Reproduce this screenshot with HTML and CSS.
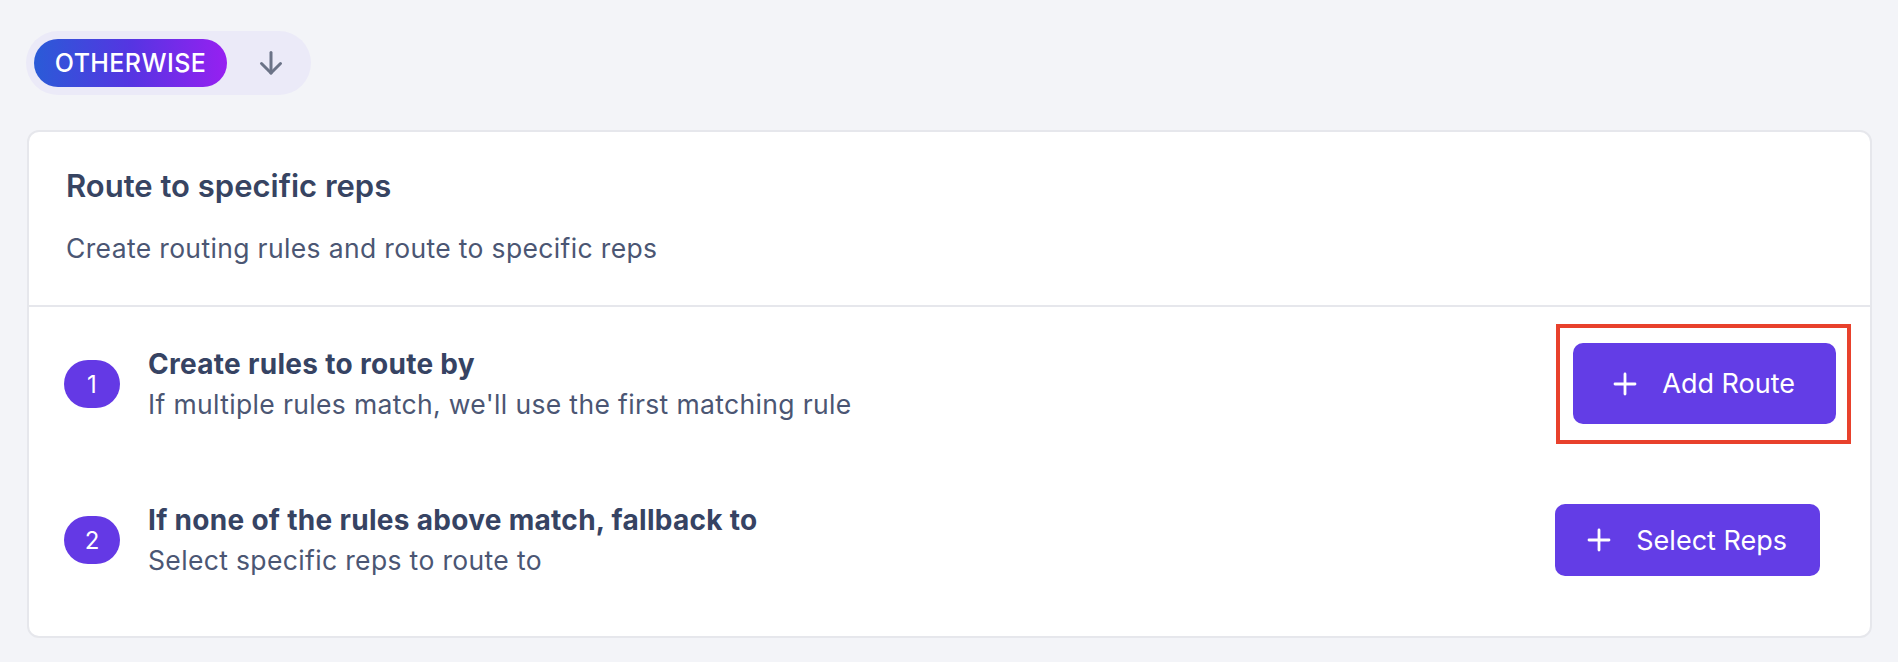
FILE: index.html
```html
<!DOCTYPE html>
<html lang="en">
<head>
<meta charset="utf-8">
<title>Route to specific reps</title>
<link rel="stylesheet" href="styles.css">
</head>
<body>
<div class="page">
  <div class="branch-toggle">
    <span class="branch-pill">OTHERWISE</span>
    <svg class="branch-arrow" width="26" height="26" viewBox="0 0 26 26" fill="none" stroke="currentColor" stroke-width="3" stroke-linecap="round" stroke-linejoin="round">
      <path d="M13 2.5V23"/>
      <path d="M3.5 13.5L13 23l9.5-9.5"/>
    </svg>
  </div>

  <section class="card">
    <header class="card-head">
      <h2 class="card-title">Route to specific reps</h2>
      <p class="card-sub">Create routing rules and route to specific reps</p>
    </header>
    <div class="card-body">
      <div class="step step-first">
        <span class="step-num">1</span>
        <div class="step-text">
          <div class="step-title">Create rules to route by</div>
          <div class="step-sub">If multiple rules match, we'll use the first matching rule</div>
        </div>
        <div class="highlight">
          <button class="btn btn-large">
            <svg class="plus" width="24" height="24" viewBox="0 0 24 24" fill="none" stroke="currentColor" stroke-width="2.8" stroke-linecap="round"><path d="M12 2v20M2 12h20"/></svg>
            <span>Add Route</span>
          </button>
        </div>
      </div>
      <div class="step step-second">
        <span class="step-num">2</span>
        <div class="step-text">
          <div class="step-title">If none of the rules above match, fallback to</div>
          <div class="step-sub">Select specific reps to route to</div>
        </div>
        <button class="btn btn-small">
          <svg class="plus" width="24" height="24" viewBox="0 0 24 24" fill="none" stroke="currentColor" stroke-width="2.8" stroke-linecap="round"><path d="M12 2v20M2 12h20"/></svg>
          <span>Select Reps</span>
        </button>
      </div>
    </div>
  </section>
</div>
</body>
</html>
```

FILE: styles.css
```css
* { box-sizing: border-box; }

html, body {
  margin: 0;
  padding: 0;
  background: #f3f4f8;
}

body {
  font-family: Inter, "Noto Sans", "Liberation Sans", sans-serif;
  color: #344160;
}

.page {
  padding: 31px 26px 0 26px;
}

.branch-toggle {
  display: flex;
  align-items: center;
  width: 285px;
  height: 64px;
  padding: 8px;
  border-radius: 32px;
  background: #ebeaf8;
}

.branch-pill {
  display: flex;
  align-items: center;
  justify-content: center;
  width: 193px;
  height: 48px;
  border-radius: 24px;
  background: linear-gradient(90deg, #2a5bd7 0%, #5535e2 50%, #9720f1 100%);
  color: #ffffff;
  font-size: 25px;
  font-weight: 500;
  letter-spacing: 0.4px;
}

.branch-arrow {
  margin-left: 31px;
  color: #6b7387;
}

.card {
  margin: 35px 0 0 1px;
  background: #ffffff;
  border: 2px solid #e6e7ec;
  border-radius: 12px;
}

.card-head {
  padding: 34px 37px 39px;
  border-bottom: 2px solid #e6e7ec;
}

.card-title {
  margin: 0;
  font-size: 31px;
  line-height: 40px;
  font-weight: 600;
  color: #374462;
}

.card-sub {
  margin: 24px 0 0;
  font-size: 26.5px;
  line-height: 36px;
  letter-spacing: 0.35px;
  font-weight: 400;
  color: #4b5673;
}

.card-body {
  display: flex;
  flex-direction: column;
  gap: 60px;
  padding: 17px 19px 60px 35px;
}

.step {
  display: flex;
  align-items: center;
}

.step-first { height: 120px; }
.step-second { height: 72px; }

.step-num {
  flex: none;
  display: flex;
  align-items: center;
  justify-content: center;
  width: 56px;
  height: 48px;
  border-radius: 24px;
  background: #6439e5;
  color: #ffffff;
  font-size: 24px;
  font-weight: 400;
}

.step-text {
  flex: 1;
  margin-left: 28px;
}

.step-title {
  font-size: 28px;
  line-height: 34px;
  letter-spacing: 0.3px;
  font-weight: 700;
  color: #364363;
}

.step-sub {
  margin-top: 5px;
  font-size: 26.5px;
  line-height: 36px;
  letter-spacing: 0.35px;
  font-weight: 400;
  color: #4b5673;
}

.highlight {
  flex: none;
  padding: 15px 11px 16px 13px;
  border: 4px solid #e8412c;
}

.btn {
  display: flex;
  align-items: center;
  gap: 25px;
  border: 0;
  border-radius: 10px;
  background: #633de6;
  color: #ffffff;
  font-family: inherit;
  font-size: 27px;
  font-weight: 400;
  cursor: pointer;
}

.btn-large {
  height: 81px;
  padding: 0 41px 0 40px;
}

.btn-small {
  height: 72px;
  padding: 0 33px 0 32px;
  margin-right: 31px;
}

.plus { flex: none; }
```
